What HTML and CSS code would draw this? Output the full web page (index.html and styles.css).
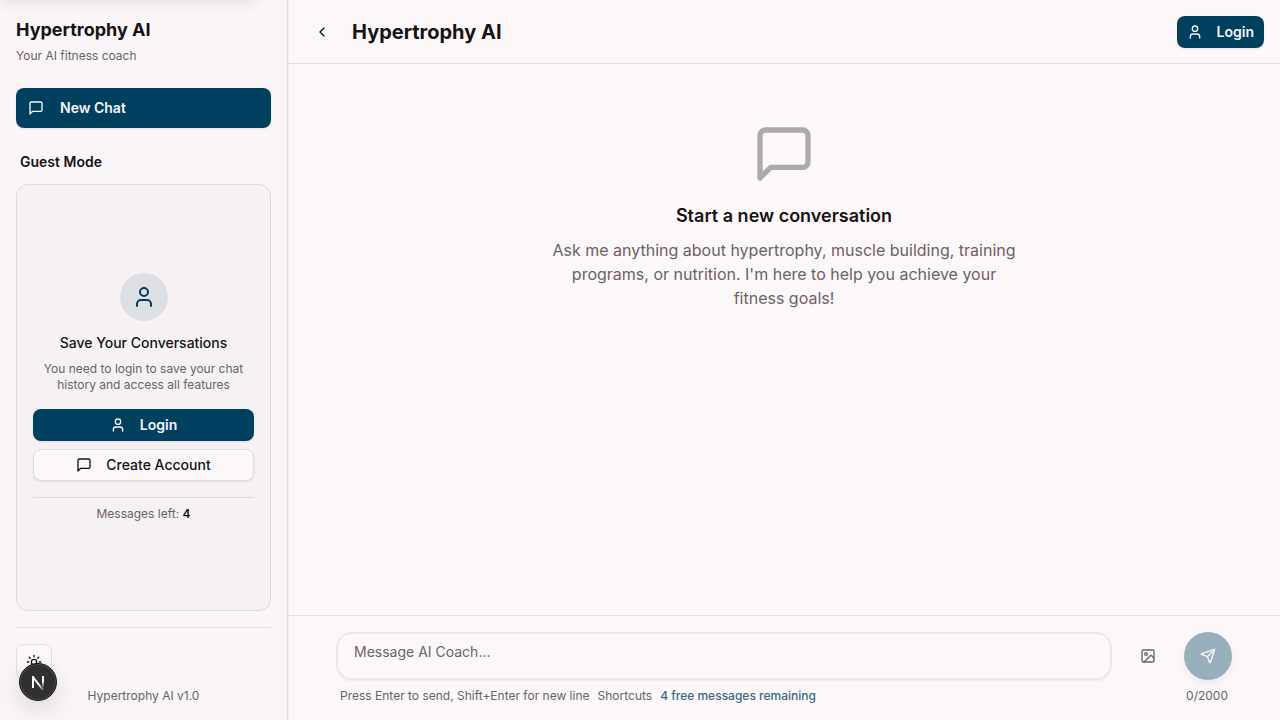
FILE: index.html
```html
<!DOCTYPE html>
<html lang="en">
<head>
<meta charset="utf-8">
<meta name="viewport" content="width=device-width, initial-scale=1">
<title>Hypertrophy AI</title>
<link rel="stylesheet" href="styles.css">
</head>
<body>
<svg class="sprite" aria-hidden="true">
  <symbol id="chat" viewBox="0 0 24 24"><path d="M21 15a2 2 0 0 1-2 2H7l-4 4V5a2 2 0 0 1 2-2h14a2 2 0 0 1 2 2z"/></symbol>
  <symbol id="user" viewBox="0 0 24 24"><path d="M19 21v-2a4 4 0 0 0-4-4H9a4 4 0 0 0-4 4v2"/><circle cx="12" cy="7" r="4"/></symbol>
  <symbol id="back" viewBox="0 0 24 24"><path d="m15 18-6-6 6-6"/></symbol>
  <symbol id="sun" viewBox="0 0 24 24"><circle cx="12" cy="12" r="4"/><path d="M12 2v2M12 20v2M4.93 4.93l1.41 1.41M17.66 17.66l1.41 1.41M2 12h2M20 12h2M6.34 17.66l-1.41 1.41M19.07 4.93l-1.41 1.41"/></symbol>
  <symbol id="image" viewBox="0 0 24 24"><rect width="18" height="18" x="3" y="3" rx="2"/><circle cx="9" cy="9" r="2"/><path d="m21 15-3.086-3.086a2 2 0 0 0-2.828 0L6 21"/></symbol>
  <symbol id="send" viewBox="0 0 24 24"><path d="M14.536 21.686a.5.5 0 0 0 .937-.024l6.5-19a.496.496 0 0 0-.635-.635l-19 6.5a.5.5 0 0 0-.024.937l7.93 3.18a2 2 0 0 1 1.112 1.11z"/><path d="m21.854 2.147-10.94 10.939"/></symbol>
</svg>
<div class="app">
  <aside class="sidebar">
    <div class="drawer-edge"></div>
    <header class="brand">
      <h2 class="brand-name">Hypertrophy AI</h2>
      <p class="brand-tag">Your AI fitness coach</p>
    </header>
    <button class="btn btn-primary btn-new" type="button"><svg class="icon"><use href="#chat"/></svg>New Chat</button>
    <h3 class="section-title">Guest Mode</h3>
    <section class="guest-card">
      <div class="avatar"><svg class="icon icon-lg"><use href="#user"/></svg></div>
      <h4 class="guest-title">Save Your Conversations</h4>
      <p class="guest-text">You need to login to save your chat history and access all features</p>
      <div class="guest-actions">
        <button class="btn btn-primary" type="button"><svg class="icon"><use href="#user"/></svg>Login</button>
        <button class="btn btn-outline" type="button"><svg class="icon"><use href="#chat"/></svg>Create Account</button>
      </div>
      <p class="quota">Messages left: <strong class="quota-count">4</strong></p>
    </section>
    <footer class="side-footer">
      <div class="theme">
        <button class="theme-btn" type="button" aria-label="Toggle theme"><svg class="icon"><use href="#sun"/></svg></button>
        <button class="dev-badge" type="button" aria-label="Open developer tools">
          <svg class="dev-logo" viewBox="0 0 36 36"><defs><linearGradient id="fade-right" x1="0" y1="12" x2="0" y2="24" gradientUnits="userSpaceOnUse"><stop offset="0.4" stop-color="#fff"/><stop offset="1" stop-color="#fff" stop-opacity="0"/></linearGradient><linearGradient id="fade-diag" x1="18" y1="18" x2="24" y2="26" gradientUnits="userSpaceOnUse"><stop offset="0.3" stop-color="#fff"/><stop offset="1" stop-color="#fff" stop-opacity="0.2"/></linearGradient></defs><path d="M13 13L23 26" fill="none" stroke="url(#fade-diag)" stroke-width="2"/><path d="M13 24V12" fill="none" stroke="#fff" stroke-width="2"/><path d="M23 12V24" fill="none" stroke="url(#fade-right)" stroke-width="2"/></svg>
        </button>
      </div>
      <p class="version">Hypertrophy AI v1.0</p>
    </footer>
  </aside>
  <main class="main">
    <header class="topbar">
      <button class="icon-btn" type="button" aria-label="Collapse sidebar"><svg class="icon"><use href="#back"/></svg></button>
      <h1 class="page-title">Hypertrophy AI</h1>
      <button class="btn btn-primary btn-login" type="button"><svg class="icon"><use href="#user"/></svg>Login</button>
    </header>
    <section class="empty">
      <svg class="empty-icon"><use href="#chat"/></svg>
      <h2 class="empty-title">Start a new conversation</h2>
      <p class="empty-text">Ask me anything about hypertrophy, muscle building, training programs, or nutrition. I'm here to help you achieve your fitness goals!</p>
    </section>
    <form class="composer">
      <div class="composer-row">
        <textarea class="message" rows="1" aria-label="Message AI Coach" placeholder="Message AI Coach..."></textarea>
        <button class="icon-btn attach" type="button" aria-label="Attach image"><svg class="icon"><use href="#image"/></svg></button>
        <button class="send" type="submit" aria-label="Send message"><svg class="icon"><use href="#send"/></svg></button>
      </div>
      <div class="hints">
        <span>Press Enter to send, Shift+Enter for new line</span>
        <button class="shortcuts" type="button">Shortcuts</button>
        <span class="remaining">4 free messages remaining</span>
        <span class="counter">0/2000</span>
      </div>
    </form>
  </main>
</div>
</body>
</html>
```
FILE: styles.css
```css
* { box-sizing: border-box; }
body {
  margin: 0;
  font-family: Inter, "Liberation Sans", sans-serif;
  font-size: 14px;
  line-height: 20px;
  color: #171215;
  background: #fcf8f9;
}
h1, h2, h3, h4, p { margin: 0; }
button, textarea { font: inherit; color: inherit; }
button { padding: 0; border: 0; background: none; cursor: pointer; }
.sprite { position: absolute; width: 0; height: 0; }
.app { display: flex; min-height: 100vh; }

.icon, .empty-icon {
  width: 16px;
  height: 16px;
  flex: none;
  fill: none;
  stroke: currentColor;
  stroke-width: 2;
  stroke-linecap: round;
  stroke-linejoin: round;
}
.icon-lg { width: 24px; height: 24px; }

.btn {
  display: flex;
  align-items: center;
  justify-content: center;
  gap: 14px;
  height: 32px;
  border-radius: 8px;
  font-weight: 500;
  box-shadow: 0 1px 2px rgba(0, 0, 0, 0.08);
}
.btn-primary { background: #00405f; color: #faf3f5; font-weight: 600; }
.btn-outline { background: #fcf8f9; border: 1px solid #e0dbdd; }
.icon-btn { display: flex; align-items: center; justify-content: center; width: 36px; height: 36px; flex: none; }

.sidebar {
  position: relative;
  display: flex;
  flex-direction: column;
  flex: none;
  width: 288px;
  padding: 16px;
  background: #faf6f7;
  border-right: 1px solid #dfdbdc;
  box-shadow: 0 1px 2px rgba(0, 0, 0, 0.12);
  overflow: hidden;
}
.drawer-edge {
  position: absolute;
  top: -24px;
  left: 0;
  width: 256px;
  height: 24px;
  box-shadow: 0 0 16px rgba(0, 0, 0, 0.12);
}
.brand-name { font-size: 18px; line-height: 28px; font-weight: 700; }
.brand-tag { margin-top: 4px; font-size: 12px; line-height: 16px; color: #6f6065; }
.btn-new { justify-content: flex-start; height: 40px; margin-top: 24px; padding: 0 12px; gap: 16px; }
.section-title { margin: 24px 4px 12px; font-size: 14px; font-weight: 600; }
.guest-card {
  display: flex;
  flex-direction: column;
  align-items: center;
  justify-content: center;
  flex: 1;
  padding: 16px;
  text-align: center;
  background: #f6f2f4;
  border: 1px solid #dfdbdc;
  border-radius: 12px;
}
.avatar {
  display: flex;
  align-items: center;
  justify-content: center;
  width: 48px;
  height: 48px;
  border-radius: 50%;
  background: #dddfe4;
  color: #00405f;
}
.guest-title { margin-top: 12px; font-size: 14px; font-weight: 500; }
.guest-text { margin-top: 8px; font-size: 12px; line-height: 16px; color: #6f6065; }
.guest-actions { display: grid; gap: 8px; width: 100%; margin-top: 16px; }
.quota {
  width: 100%;
  margin-top: 16px;
  padding-top: 8px;
  border-top: 1px solid #dfdbdc;
  font-size: 12px;
  line-height: 16px;
  color: #6f6065;
}
.quota-count { font-weight: 600; color: #171215; }
.side-footer { margin-top: 16px; padding-top: 16px; border-top: 1px solid #e6dcdf; }
.theme { position: relative; width: 36px; }
.theme-btn {
  display: flex;
  align-items: center;
  justify-content: center;
  width: 36px;
  height: 36px;
  border: 1px solid #e6dcdf;
  border-radius: 8px;
  background: #fcf8f9;
}
.dev-badge {
  position: absolute;
  top: 19px;
  left: 3px;
  width: 38px;
  height: 38px;
  border: 1px solid #1a1a1a;
  border-radius: 50%;
  background: #303030;
  box-shadow: inset 0 0 0 1px #4a4a4a, 0 8px 24px rgba(0, 0, 0, 0.12);
}
.dev-logo { display: block; width: 36px; height: 36px; }
.version { margin-top: 8px; font-size: 12px; line-height: 16px; text-align: center; color: #6f6065; }

.main { display: flex; flex-direction: column; flex: 1; min-width: 0; }
.topbar {
  display: flex;
  align-items: center;
  height: 64px;
  padding: 0 16px;
  border-bottom: 1px solid #e0dbdd;
}
.page-title { margin-left: 12px; font-size: 20px; line-height: 28px; font-weight: 700; }
.btn-login { margin-left: auto; padding: 0 10px; }
.empty { flex: 1; padding: 58px 24px; text-align: center; }
.empty-icon { display: block; width: 64px; height: 64px; margin: 0 auto 16px; stroke: #b1a8ab; }
.empty-title { font-size: 18px; line-height: 28px; font-weight: 600; }
.empty-text { max-width: 464px; margin: 8px auto 0; font-size: 16px; line-height: 24px; color: #6f6065; }
.composer { padding: 16px 48px; border-top: 1px solid #e6e1e3; }
.composer-row { display: flex; align-items: center; }
.message {
  flex: 1;
  min-width: 0;
  height: 48px;
  padding: 8px 16px;
  border: 2px solid #ebe7e9;
  border-radius: 16px;
  background: #fcf8f9;
  resize: none;
  box-shadow: 0 1px 2px rgba(0, 0, 0, 0.06);
}
.message::placeholder { color: #6f6065; opacity: 1; }
.attach { margin: 0 18px; color: #6f6065; }
.send {
  display: flex;
  align-items: center;
  justify-content: center;
  flex: none;
  width: 48px;
  height: 48px;
  border-radius: 50%;
  background: #97afbd;
  color: #fcf8f9;
  box-shadow: 0 4px 8px rgba(0, 0, 0, 0.06);
}
.hints { display: flex; gap: 8px; margin-top: 8px; padding: 0 4px; font-size: 12px; line-height: 16px; color: #6f6065; }
.remaining { font-weight: 500; color: #3a6a85; }
.counter { margin-left: auto; }
```
